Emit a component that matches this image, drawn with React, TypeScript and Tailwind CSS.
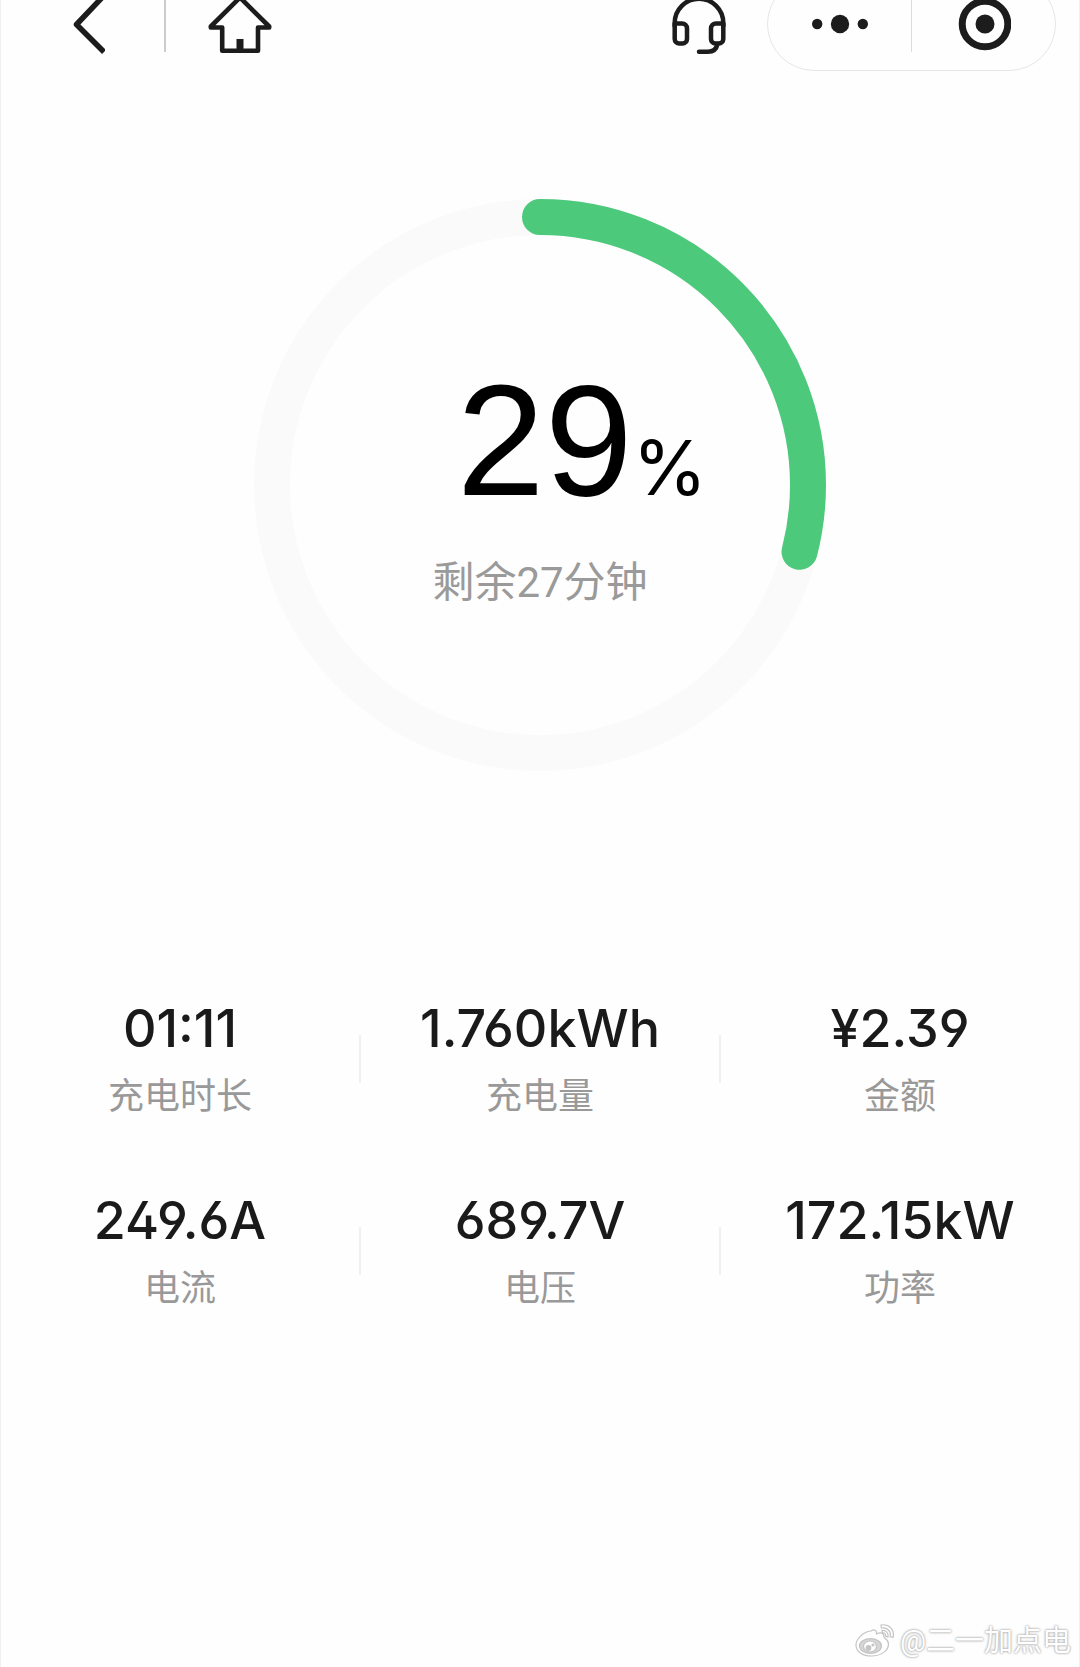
import { ReactNode } from "react"

const PERCENT = 29
const RADIUS = 268
const CIRCUMFERENCE = 2 * Math.PI * RADIUS

const stats = [
  { label: "充电时长", value: "01:11" },
  { label: "充电量", value: "1.760kWh" },
  { label: "金额", value: "¥2.39" },
  { label: "电流", value: "249.6A" },
  { label: "电压", value: "689.7V" },
  { label: "功率", value: "172.15kW" },
]

const IconButton = ({ label, className, children }: { label: string; className?: string; children: ReactNode }) => (
  <button type="button" aria-label={label} className={`flex items-center justify-center ${className ?? ""}`}>
    {children}
  </button>
)

const BackIcon = () => (
  <svg width="32" height="60" viewBox="0 0 32 60" fill="none" stroke="#1c1c1c" strokeWidth="5.500" strokeLinejoin="round">
    <path d="M31 1.500 3.500 30.500l27.500 27.500" />
  </svg>
)

const HomeIcon = () => (
  <svg width="64" height="60" viewBox="0 0 64 60" fill="none" stroke="#1c1c1c" strokeWidth="4.600" strokeLinejoin="round">
    <path d="M32 3.500 2.800 32.500V33.500H14.200V56.800H50V33.500H61.200V32.500Z" />
    <path d="M32 45v11" strokeWidth="7" />
  </svg>
)

const HeadsetIcon = () => (
  <svg width="56" height="60" viewBox="0 0 56 60" fill="none" stroke="#1c1c1c" strokeWidth="4.500" strokeLinecap="round" strokeLinejoin="round">
    <path d="M3.700 32V29A24.300 24.300 0 0 1 52.300 29V32" />
    <path d="M3.700 29.500H11a5 5 0 0 1 5 5V45a4.500 4.500 0 0 1-4.500 4.500H8.200A4.500 4.500 0 0 1 3.700 45Z" />
    <path d="M52.300 29.500H45a5 5 0 0 0-5 5V45a4.500 4.500 0 0 0 4.500 4.500h3.300a4.500 4.500 0 0 0 4.500-4.500Z" />
    <path d="M46.500 50C45.500 55 42 57.700 37 57.700H28" />
  </svg>
)

const MoreIcon = () => (
  <svg width="56" height="20" viewBox="0 0 56 20" fill="#1c1c1c">
    <circle cx="5.200" cy="10" r="5.200" />
    <circle cx="28" cy="10" r="9.200" />
    <circle cx="50.800" cy="10" r="5.200" />
  </svg>
)

const CloseIcon = () => (
  <svg width="54" height="54" viewBox="0 0 54 54">
    <circle cx="28" cy="27" r="22.800" fill="none" stroke="#1c1c1c" strokeWidth="7" />
    <circle cx="28" cy="27" r="9.500" fill="#1c1c1c" />
  </svg>
)

const WeiboIcon = () => (
  <svg width="42" height="36" viewBox="0 0 42 36" fill="#fff" stroke="#c4c4c4" strokeWidth="1.200">
    <path d="M17 8c3-2 6-1 5.500 3 3-1.500 8-2 7.500 3-.2 1.500 4.500 2 4.500 7 0 7-8 12-17 12S2 28.500 2 22C2 16.500 9 8.500 17 8Z" />
    <ellipse cx="16.500" cy="23" rx="11" ry="7.300" fill="#d6d6d6" />
    <ellipse cx="16" cy="23.500" rx="6.500" ry="5.500" />
    <circle cx="14.500" cy="25" r="2.300" fill="#c4c4c4" />
    <circle cx="19" cy="22" r="1" fill="#c4c4c4" />
    <path d="M27 2c8-1.500 14 5 12 12.500l-2.800-.8C37.500 8.500 33 4 27.500 5Z" />
    <path d="M28 7.500c4-.5 7 2.500 6 6.500l-2.300-.6c.4-2.400-1.200-4-3.400-3.600Z" />
  </svg>
)

const Header = () => (
  <header className="-mt-6 flex h-24 items-center justify-between pl-[72px] pr-[23px]">
    <div className="flex items-center">
      <IconButton label="返回">
        <BackIcon />
      </IconButton>
      <span className="ml-[59px] h-14 w-[2px] bg-[#cccccc]" />
      <IconButton label="首页" className="ml-[42px]">
        <HomeIcon />
      </IconButton>
    </div>
    <div className="flex items-center">
      <IconButton label="客服" className="mr-10">
        <HeadsetIcon />
      </IconButton>
      <div className="flex h-[94px] w-[289px] items-center rounded-full border border-[#e6e6e6]">
        <IconButton label="更多" className="h-full flex-1">
          <MoreIcon />
        </IconButton>
        <span className="h-14 w-px bg-[#dcdcdc]" />
        <IconButton label="关闭" className="h-full flex-1">
          <CloseIcon />
        </IconButton>
      </div>
    </div>
  </header>
)

const ChargeRing = () => (
  <section className="mt-[127px] grid place-items-center">
    <svg className="col-start-1 row-start-1" width="572" height="572" viewBox="0 0 572 572" fill="none" strokeWidth="36">
      <circle cx="286" cy="286" r={RADIUS} stroke="#fafafa" />
      <circle
        cx="286"
        cy="286"
        r={RADIUS}
        stroke="#4dc97c"
        strokeLinecap="round"
        strokeDasharray={`${(CIRCUMFERENCE * PERCENT) / 100} ${CIRCUMFERENCE}`}
        transform="rotate(-90 286 286)"
      />
    </svg>
    <div className="col-start-1 row-start-1 flex flex-col items-center">
      <p className="flex items-baseline pl-[84px] leading-[160px] text-black">
        <span className="font-['Liberation_Sans'] text-[158px]">{PERCENT}</span>
        <span className="font-[Inter] text-[76px]">%</span>
      </p>
      <p className="mt-2 text-[42px] leading-[56px] text-[#9a9a9a]">剩余27分钟</p>
    </div>
  </section>
)

const StatGrid = () => (
  <dl className="-mx-px mt-[224px] grid grid-cols-3 gap-y-16">
    {stats.map((stat, index) => (
      <div key={stat.label} className="flex h-32 items-center">
        <div className="flex flex-1 flex-col-reverse items-center pt-2">
          <dt className="text-[36px] leading-[68px] text-[#999999]">{stat.label}</dt>
          <dd className="font-[Inter] text-[52px] leading-[68px] font-medium text-[#1a1a1a] [font-feature-settings:'ss01']">
            {stat.value}
          </dd>
        </div>
        {index % 3 < 2 && <span className="-mx-px h-12 w-[2px] bg-[#f0f0f0]" />}
      </div>
    ))}
  </dl>
)

const Watermark = () => (
  <footer className="mt-auto flex items-center justify-end gap-1 pr-2 pb-2">
    <WeiboIcon />
    <span className="text-[29px] leading-9 text-white [text-shadow:0_0_2px_#999,0_0_3px_#bbb]">@二一加点电</span>
  </footer>
)

export default function App() {
  return (
    <main className="flex min-h-screen flex-col overflow-hidden border-x border-[#f0f0f0] bg-[#fefefe] font-[Roboto,'Noto_Sans_CJK_SC',sans-serif]">
      <Header />
      <ChargeRing />
      <StatGrid />
      <Watermark />
    </main>
  )
}
